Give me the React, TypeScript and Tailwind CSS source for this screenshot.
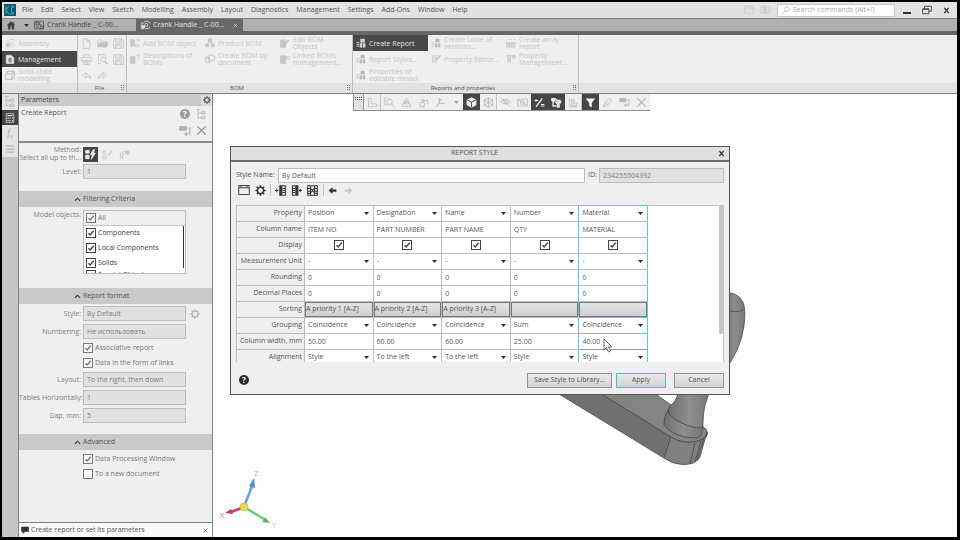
import React from 'react';
import clsx from 'clsx';

const menuItems = [
  'File', 'Edit', 'Select', 'View', 'Sketch', 'Modelling', 'Assembly', 'Layout',
  'Diagnostics', 'Management', 'Settings', 'Add-Ons', 'Window', 'Help',
];

// 16x16 glyphs, drawn with the current text colour
const glyphs = {
  home: <path d="M8 2 1 8.5h2V15h4v-5h2v5h4V8.5h2L12.5 6V3h-2v1.3z" fill="currentColor" stroke="none" />,
  drawing: <><path d="M1 2h14v12H1z" /><path d="M3 4h4v4H3zM9 4v4h4M3 11h5M10 10h5v4h-5z" /></>,
  part: <><path d="M2 5v9h5M2 5h4l2-3h3a5 5 0 0 1 0 12H8" /><circle cx="10" cy="8" r="2.5" /><path d="M3 9h4v4H3z" fill="currentColor" /></>,
  report: <><path d="M2 2h8l4 4v9H2z" fill="currentColor" /><path d="M5 8h6M5 11h6M8 6v8" stroke="#555" /></>,
  solid: <><path d="M1 6h10v9H1z" strokeWidth="2" /><path d="M1 6l3-4h11v9l-4 4M11 6l4-4" strokeWidth="2" /></>,
  page: <path d="M3 1h6l4 4v10H3zM9 1v4h4" />,
  folder: <><path d="M1 13V3h5l1 2h7v2" /><path d="M1 13l2-6h13l-2 6z" fill="currentColor" /></>,
  save: <><path d="M1 1h12l2 2v12H1zM4 1v5h8V1M4 15V9h8v6M10 2v3M6 11h4" /></>,
  print: <><path d="M4 5V1h8v4M4 11H1V5h14v6h-3M4 9h8v6H4zM6 11h4M6 13h4" /></>,
  preview: <><path d="M6 14H2V1h8l3 3v3" /><circle cx="9" cy="8" r="3.5" /><path d="m11.5 10.5 3.5 4" strokeWidth="2" /></>,
  undo: <path d="M7 3 2 8l5 4V9.500h3q3 0 4 3 0-6-5-6H7z" />,
  redo: <path d="m9 3 5 5-5 4V9.500H6q-3 0-4 3 0-6 5-6h2z" />,
  bomAdd: <><path d="M1 3h6v10H1z" fill="currentColor" /><path d="M1 6h7M1 9h7M9 10h5v4H9zM13 1v5M10.500 3.500h5" /></>,
  bomAsk: <><path d="M1 4h7v11H1z" fill="currentColor" /><path d="M11 3q0-2 2-2t2 2q0 1-2 2.500V7M13 8v1" /></>,
  product: <><path d="M5 1h6v5H5zM1 10h5v4H1zM10 10h5v4h-5z" fill="currentColor" /><path d="M8 6v2M3 10V8h10v2" /></>,
  bomDoc: <><path d="M1 5h6v9H1zM6 2h9v8H6z" strokeWidth="1.500" /><path d="M3 7h5M8 10v3H5" strokeWidth="1.500" /></>,
  bomEdit: <><path d="M1 3h8v12H1z" fill="currentColor" /><path d="m8 10 6-7" strokeWidth="3" /></>,
  link: <><path d="M1 3h8v12H1z" fill="currentColor" /><path d="M10 4h5v4h-5zM7 6h5" /></>,
  create: <><path d="M7 1h7v6H7zM6 8.500h4V15H6zM11 8.500h4V15h-4z" fill="currentColor" stroke="none" /><path d="M1 7h4M1 10h4M1 13h4M9 3h3M9 5h3" strokeWidth="1.500" /><path d="M9 3h3M9 5h3M7 11h2M12 11h2M7 13h2M12 13h2" stroke="#888" strokeWidth="0.8" /></>,
  arrayRep: <><path d="M1 7h5v8H1zM8 7h6v8H8z" /><path d="M1 9h5M1 12h5M8 9h6M8 12h6M3 2h1M7 2h2M12 2h2" strokeWidth="2" /></>,
  propEdit: <><path d="M1 3h9M3 3v12M3 7h6M3 11h6M8 4v11" strokeWidth="1.500" /><path d="m9 9 6-7" strokeWidth="2.500" /></>,
  propMan: <><path d="M1 3h8M3 3v12M7 3v12M3 7h4M3 11h4" strokeWidth="1.500" /><circle cx="12.500" cy="4.500" r="2" strokeWidth="2" /></>,
  corner: <path d="M2 2h4v8h8v4H2z" />,
  zoomSel: <><circle cx="8" cy="7" r="4" /><path d="m11 10 4 5M1 1v10M1 1h3M1 11h3" /></>,
  orient: <><path d="M2 10h12v4H2zM5 10V6l3-4 3 4v4" /><path d="M5 7h6" strokeWidth="2" /></>,
  rotate: <><path d="M6 5h8v6M3 8h6v6H3z" /><path d="m9 2-4 3 4 2" /></>,
  axes: <path d="M6 1v8M6 9l-4 5M6 9h8M6 6l4-3" strokeWidth="1.500" />,
  cube: <><path d="m8 1 6.500 3v7.500L8 15l-6.500-3.500V4z" fill="currentColor" /><path d="M1.500 4 8 7.500 14.500 4M8 7.500V15" stroke="#333" /></>,
  wireCube: <path d="m8 1 6 3v8l-6 3-6-3V4zM2 4l6 4 6-4M8 8v7M2 12l6-4 6 4M8 1v7" />,
  eye: <><path d="M1 7q7-7 14 0-7 6-14 0z" /><circle cx="8" cy="7" r="2" /><path d="m2 2 12 12" /></>,
  section: <><path d="M1 3h14v10H1z" /><circle cx="8" cy="8" r="3" /><path d="m2 4 12 8" /></>,
  screen: <><path d="M1 3h14v10H1z" /><path d="M6 3h4v10H6z" fill="currentColor" /></>,
  snap: <><path d="M1 5h5M3 3v4M10 11h5M10 13h5" strokeWidth="1.500" /><path d="m3 14 9-12" strokeWidth="2" /></>,
  filterObj: <><path d="M1 3h6l2 2h4v3M3 6v7h5" strokeWidth="2" /><path d="M1 2h5v4H1zM6 7h9l-3 4v4h-3v-4z" fill="currentColor" /></>,
  layers: <><path d="M2 2v12h12M5 4h4v3H5zM5 9h8v3H5z" /></>,
  funnel: <path d="M1 2h14L10 8.500V15l-4-2V8.500z" fill="currentColor" stroke="none" />,
  pencil: <path d="m2 14 3-7 6-5 3 3-5 6z M5 7l4 4" />,
  applyRow: <><path d="M1 2h9v5H1z" fill="currentColor" /><path d="M12 4h2.500v8H8M10.500 9.500 8 12l2.500 2.500" strokeWidth="1.500" /></>,
  cross: <path d="m2 2 12 12M14 2 2 14" strokeWidth="2" />,
  tree: <path d="M3 1v13M1 1h5M3 6h4M3 13h4M8 4h5v3H8zM8 11h5v3H8z" />,
  calc: <><path d="M2 1h12v14H2z" /><path d="M4 4h8M4 8h2M7 8h2M11 8h2M4 12h2M7 12h2M11 12h2" strokeWidth="2" /></>,
  lines: <path d="M1 3h14M1 8h14M1 13h14" strokeWidth="2" />,
  gear: <><circle cx="8" cy="8" r="4.500" strokeWidth="2" /><path d="M8 .5v3M8 12.500v3M.5 8h3M12.500 8h3M2.700 2.700l2 2M11.300 11.300l2 2M13.300 2.700l-2 2M4.700 11.300l-2 2" strokeWidth="2.500" /></>,
  bolt: <><path d="M1 2h5v4H1zM1 9h5v5H1z" fill="currentColor" /><path d="m12 1-4 7h3l-2 7 6-9h-3l2-5z" fill="currentColor" /></>,
  tick: <><path d="M1 3h4v4H1zM1 10h5v4H1z" /><path d="m8 6 2 3 5-7" strokeWidth="1.500" /></>,
  gauge: <><path d="M2 14V8l4-4h4M5 14V9l3-2" strokeWidth="1.500" /><circle cx="12" cy="5" r="2.500" fill="currentColor" /></>,
  window: <path d="M1 2h14v12H1zM1 5h14M4 2v3M12 2v3" />,
  colLeft: <><path d="M7 1h3v14H7z" fill="currentColor" strokeWidth="1.500" /><path d="M11 1h4v14h-4M11 5h4M11 8h4M11 11h4M0 8h5M2.500 5.500v5" strokeWidth="1.500" /></>,
  colRight: <><path d="M7 1h3v14H7z" fill="currentColor" strokeWidth="1.500" /><path d="M6 1H2v14h4M2 5h4M2 8h4M2 11h4M11 8h5M13.500 5.500v5" strokeWidth="1.500" /></>,
  colDel: <><path d="M1 1h14v14H1zM5 1v14M11 1v14M1 5h4M1 9h4M1 12h4M11 5h4M11 9h4M11 12h4" strokeWidth="1.500" /><path d="m6 5 4 6M10 5l-4 6" strokeWidth="1.500" /></>,
  left: <path d="m1 8 7-6v4h7v4H8v4z" fill="currentColor" stroke="none" />,
  right: <path d="m15 8-7-6v4H1v4h7v4z" fill="currentColor" stroke="none" />,
  bubble: <path d="M1 2h14v9H8l-4 4v-4H1z" fill="currentColor" />,
  lens: <><circle cx="10" cy="6" r="4.500" /><path d="m7 9.500-5.500 5.500" strokeWidth="1.500" /></>,
  restore: <path d="M1 6h10v8H1zM4 6V2h11v8h-4M1 7h10" strokeWidth="1.500" />,
  close: <path d="m3 2 10 12M13 2 3 14" strokeWidth="3" />,
  chevron: <path d="m2 11 6-6 6 6" strokeWidth="2.500" />,
};

type GlyphName = keyof typeof glyphs;

function Glyph({ name, className = 'size-3' }: { name: GlyphName; className?: string }) {
  return (
    <svg viewBox="0 0 16 16" fill="none" stroke="currentColor" strokeWidth="1.2" className={clsx('shrink-0', className)} aria-hidden="true">
      {glyphs[name]}
    </svg>
  );
}

function IconButton({ name, label, className, size }: { name: GlyphName; label: string; className?: string; size?: string }) {
  return (
    <button type="button" aria-label={label} className={clsx('flex shrink-0 items-center justify-center', className)}>
      <Glyph name={name} className={size} />
    </button>
  );
}

function Check({ id, label, checked = true, tone = 'text-[#444]' }: { id: string; label?: string; checked?: boolean; tone?: string }) {
  return (
    <span className={clsx('inline-flex items-center gap-[2px]', tone)}>
      <span className="grid size-[10px] shrink-0">
        <input
          id={id}
          type="checkbox"
          defaultChecked={checked}
          aria-label={label ? undefined : id}
          className="peer col-start-1 row-start-1 size-[10px] appearance-none border border-current bg-white/60"
        />
        <svg viewBox="0 0 10 10" className="pointer-events-none invisible col-start-1 row-start-1 size-[10px] peer-checked:visible" fill="none" stroke="currentColor" strokeWidth="1.4" aria-hidden="true">
          <path d="M2.500 5.200 4.200 7l3.500-4.200" />
        </svg>
      </span>
      {label && <label htmlFor={id} className="whitespace-nowrap">{label}</label>}
    </span>
  );
}

function MenuBar() {
  return (
    <header className="flex h-[17px] items-center border-b border-[#808080] bg-[#e1e2e2] text-[#555]">
      <svg viewBox="0 0 12 12" className="ml-[2px] size-3 shrink-0" aria-hidden="true">
        <path d="M0 0h12v12H0z" fill="#10566b" />
        <path d="M2 2v8M2 6l3-4M2 6l3 4M10 3a3 3 0 1 0 0 6M7 2h3M6 10h4" fill="none" stroke="#35b6d3" strokeWidth="1" />
      </svg>
      <nav className="ml-[6px] flex gap-2">
        {menuItems.map((item) => (
          <button key={item} type="button">{item}</button>
        ))}
      </nav>
      <div className="ml-auto flex items-center text-[#cacaca]">
        <IconButton name="window" label="Panel layout" className="mr-[6px]" size="size-[10px]" />
        <IconButton name="screen" label="Screen layout" className="mr-[7px]" size="size-[10px]" />
        <div className="flex h-[13px] w-[118px] items-center gap-[3px] border border-[#c8c8c8] bg-white pl-1 text-[#999]">
          <Glyph name="lens" className="size-2" />
          <input aria-label="Search commands" placeholder="Search commands (Alt+/)" className="w-full min-w-0 outline-none placeholder:text-[#aaa]" />
        </div>
        <button type="button" aria-label="Minimize" className="ml-2 flex h-3 w-[10px] items-end pb-[2px]">
          <span className="h-[2px] w-2 bg-[#333]" />
        </button>
        <IconButton name="restore" label="Restore" className="ml-[9px] text-[#444]" size="size-[10px]" />
        <IconButton name="close" label="Close" className="mr-[7px] ml-[11px] text-[#333]" size="size-[7px]" />
      </div>
    </header>
  );
}

function TabBar() {
  return (
    <div className="flex h-4 items-stretch border-b-4 border-[#676767] bg-[#b0b0b0] text-[#444]">
      <IconButton name="home" label="Home" className="w-[18px]" size="size-[10px]" />
      <button type="button" aria-label="Recent files" className="flex w-3 items-center justify-center">
        <Caret />
      </button>
      <button type="button" className="ml-[2px] flex w-[102px] items-center gap-[3px]">
        <Glyph name="drawing" className="size-[10px]" />
        Crank Handle _ C-00...
      </button>
      <div className="flex w-[107px] items-center bg-[#676767] pl-1 text-[#e4e4e4]">
        <button type="button" className="flex items-center gap-[3px]">
          <Glyph name="part" className="size-[10px]" />
          Crank Handle _ C-00...
        </button>
        <IconButton name="cross" label="Close tab" className="ml-[9px]" size="size-[5px]" />
      </div>
    </div>
  );
}

function Caret() {
  return (
    <svg viewBox="0 0 5 3" className="pointer-events-none h-[3px] w-[5px] shrink-0" aria-hidden="true">
      <path d="M0 0h5L2.500 3z" fill="#333" />
    </svg>
  );
}

function Grip() {
  return (
    <svg viewBox="0 0 3 6" className="h-[6px] w-[3px] shrink-0" aria-hidden="true">
      <path d="M0 0h1v1H0zM2 0h1v1H2zM0 2h1v1H0zM2 2h1v1H2zM0 4h1v1H0zM2 4h1v1H2z" fill="#777" />
    </svg>
  );
}

interface Command {
  icon: GlyphName;
  text: string;
  active?: boolean;
}

function CommandButton({ icon, text, active }: Command) {
  return (
    <button
      type="button"
      className={clsx('flex h-4 items-center gap-[3px] pl-[3px] text-left leading-[7px] whitespace-pre', active ? 'bg-[#484848] text-[#e2e2e2]' : 'text-[#c6c6c6]')}
    >
      <Glyph name={icon} className="size-[10px]" />
      <span>{text}</span>
    </button>
  );
}

const bomCommands: Command[] = [
  { icon: 'bomAdd', text: 'Add BOM object' },
  { icon: 'product', text: 'Product BOM' },
  { icon: 'bomEdit', text: 'Edit BOM\nObjects' },
  { icon: 'bomAsk', text: 'Descriptions of\nBOMs' },
  { icon: 'bomDoc', text: 'Create BOM by\ndocument' },
  { icon: 'link', text: 'Linked BOMs\nmanagement...' },
];

const reportCommands: Command[] = [
  { icon: 'create', text: 'Create Report', active: true },
  { icon: 'create', text: 'Create table of\nversions...' },
  { icon: 'arrayRep', text: 'Create array\nreport' },
  { icon: 'create', text: 'Report Styles...' },
  { icon: 'propEdit', text: 'Property Editor...' },
  { icon: 'propMan', text: 'Property\nManagement...' },
  { icon: 'create', text: 'Properties of\neditable model' },
];

const fileIcons: [GlyphName, string][] = [
  ['page', 'New'], ['folder', 'Open'], ['save', 'Save'],
  ['print', 'Print'], ['preview', 'Preview'], ['save', 'Save as'],
  ['undo', 'Undo'], ['redo', 'Redo'],
];

function RibbonGroup({ title, className, children }: { title: string; className: string; children: React.ReactNode }) {
  return (
    <section className={clsx('flex shrink-0 flex-col border-r border-[#bdbdbd]', className)}>
      <div className="h-12">{children}</div>
      <div className="flex h-[10px] items-center bg-[#e2e2e2] pr-[2px] text-[#555]">
        <span className="flex-1 text-center text-[6px]">{title}</span>
        {title && <Grip />}
      </div>
    </section>
  );
}

function Ribbon() {
  return (
    <div className="flex border-b border-[#808080] bg-[#efefef]">
      <RibbonGroup title="" className="w-[76px]">
        <div className="grid">
          <CommandButton icon="part" text="Assembly" />
          <CommandButton icon="report" text="Management" active />
          <CommandButton icon="solid" text={'Solid-state\nmodelling'} />
        </div>
      </RibbonGroup>
      <RibbonGroup title="File" className="w-[49px]">
        <div className="grid grid-cols-3 text-[#c2c2c2]">
          {fileIcons.map(([icon, label]) => (
            <IconButton key={label} name={icon} label={label} className="h-4" size="size-[11px]" />
          ))}
        </div>
      </RibbonGroup>
      <RibbonGroup title="BOM" className="w-[226px]">
        <div className="grid grid-cols-3">
          {bomCommands.map((command) => (
            <CommandButton key={command.text} {...command} />
          ))}
        </div>
      </RibbonGroup>
      <RibbonGroup title="Reports and properties" className="w-[226px]">
        <div className="grid grid-cols-3">
          {reportCommands.map((command) => (
            <CommandButton key={command.text} {...command} />
          ))}
        </div>
      </RibbonGroup>
      <div className="flex flex-1 flex-col">
        <div className="h-12" />
        <div className="h-[10px] bg-[#e2e2e2]" />
      </div>
    </div>
  );
}

function SideStrip() {
  return (
    <aside className="flex w-4 shrink-0 flex-col bg-[#c4c5c5]">
      <IconButton name="tree" label="Model tree" className="h-4 bg-[#e4e4e4] text-[#b4b4b4]" />
      <IconButton name="calc" label="Parameters" className="h-[15px] bg-[#454545] text-[#ddd]" size="size-[10px]" />
      <button type="button" aria-label="Variables" className="h-4 bg-[#e4e4e4] font-['Liberation_Serif',serif] text-[10px] leading-4 text-[#aaa] italic">
        f<sub className="text-[6px]">x</sub>
      </button>
      <IconButton name="lines" label="Lists" className="h-4 bg-[#e4e4e4] text-[#b4b4b4]" size="size-[10px]" />
    </aside>
  );
}

function SectionHeader({ title }: { title: string }) {
  return (
    <button type="button" className="flex h-4 w-full items-center gap-[2px] bg-[#c9c9c9] pl-[55px] text-[#555]">
      <Glyph name="chevron" className="size-[7px] text-[#333]" />
      {title}
    </button>
  );
}

function Field({ id, label, value, children }: { id: string; label: string; value: string; children?: React.ReactNode }) {
  return (
    <div className="flex items-center gap-[2px] text-[#808080]">
      <label htmlFor={id} className="w-[62px] shrink-0 text-right whitespace-nowrap">{label}:</label>
      <input id={id} defaultValue={value} className="h-[15px] w-[103px] border border-[#bdbdbd] bg-[#e1e1e1] px-[3px] outline-none" />
      {children}
    </div>
  );
}

function ParametersPanel() {
  return (
    <section className="flex w-[195px] shrink-0 flex-col border-x border-[#808080] bg-[#efefef]">
      <div className="flex h-3 items-center justify-between bg-[#c9c9c9] pl-[2px] text-[#444]">
        Parameters
        <IconButton name="gear" label="Panel settings" className="size-[11px] bg-[#dedede]" size="size-2" />
      </div>
      <div className="flex h-[37px] justify-between border-b-2 border-[#8a8a8a] pt-[2px] pr-[5px] pl-[2px] text-[#555]">
        <h2>Create Report</h2>
        <div className="grid grid-cols-2 gap-x-1 text-[#b0b0b0]">
          <button type="button" aria-label="Help" className="flex size-3 items-center justify-center">
            <span className="size-[10px] rounded-full bg-[#999] text-center text-[8px] leading-[10px] font-bold text-white">?</span>
          </button>
          <IconButton name="tree" label="Tree" className="size-3" size="size-[11px]" />
          <IconButton name="applyRow" label="Create" className="size-3" size="size-3" />
          <IconButton name="cross" label="Cancel" className="size-3 text-[#909090]" size="size-[11px]" />
        </div>
      </div>

      <div className="flex flex-col gap-[2px] pt-[3px]">
        <div className="flex items-center gap-[2px] text-[#808080]">
          <div className="w-[62px] shrink-0 text-right leading-2 whitespace-nowrap">
            <div>Method:</div>
            <div>Select all up to th...</div>
          </div>
          <IconButton name="bolt" label="Select all" className="size-[15px] bg-[#454545] text-[#eee]" size="size-[11px]" />
          <IconButton name="tick" label="Select manually" className="size-[15px] text-[#c4c4c4]" size="size-[11px]" />
          <IconButton name="gauge" label="Select by level" className="size-[15px] text-[#c4c4c4]" size="size-[11px]" />
        </div>
        <Field id="level" label="Level" value="1" />
      </div>

      <div className="pt-3">
        <SectionHeader title="Filtering Criteria" />
        <div className="flex gap-[2px] pt-[3px] text-[#808080]">
          <div className="w-[62px] shrink-0 text-right whitespace-nowrap">Model objects:</div>
          <div className="h-16 w-[103px] overflow-hidden border border-[#bdbdbd] bg-white">
            <div className="flex h-[15px] items-center border-b border-[#c4c4c4] bg-[#efefef] pl-[2px]">
              <Check id="all" label="All" tone="text-[#777]" />
            </div>
            <div className="mr-px flex flex-col gap-[5px] border-r border-[#333] pt-[2px] pl-[2px] leading-[10px]">
              <Check id="components" label="Components" />
              <Check id="local-components" label="Local Components" />
              <Check id="solids" label="Solids" />
            </div>
            <div className="pt-[2px] pl-[2px] leading-[10px]">
              <Check id="special-objects" label="Special Objects" checked={false} />
            </div>
          </div>
        </div>
      </div>

      <div className="pt-[14px]">
        <SectionHeader title="Report format" />
        <div className="flex flex-col gap-[3px] pt-[2px]">
          <Field id="style" label="Style" value="By Default">
            <IconButton name="gear" label="Style settings" className="ml-[2px] text-[#b8b8b8]" size="size-[10px]" />
          </Field>
          <Field id="numbering" label="Numbering" value="Не использовать" />
          <div className="flex flex-col items-start gap-[5px] py-px pl-16 leading-[10px]">
            <Check id="associative" label="Associative report" tone="text-[#777]" />
            <Check id="links" label="Data in the form of links" tone="text-[#777]" />
          </div>
          <Field id="layout" label="Layout" value="To the right, then down" />
          <Field id="tables" label="Tables Horizontally" value="1" />
          <Field id="gap" label="Gap, mm" value="5" />
        </div>
      </div>

      <div className="pt-[11px]">
        <SectionHeader title="Advanced" />
        <div className="flex flex-col items-start gap-[5px] pt-1 pl-16 leading-[10px]">
          <Check id="data-window" label="Data Processing Window" tone="text-[#777]" />
          <Check id="new-document" label="To a new document" checked={false} tone="text-[#777]" />
        </div>
      </div>

      <div className="mt-auto flex h-[15px] items-center gap-[2px] border-t border-[#808080] bg-[#fafafa] px-[2px] text-[#555]">
        <Glyph name="bubble" className="size-2 text-[#333]" />
        <span className="flex-1 whitespace-nowrap">Create report or set its parameters</span>
        <IconButton name="cross" label="Dismiss" size="size-[5px]" className="mr-[2px]" />
      </div>
    </section>
  );
}

interface ViewTool {
  icon: GlyphName;
  label: string;
  active?: boolean;
  divider?: boolean;
}

const viewTools: ViewTool[] = [
  { icon: 'corner', label: 'Coordinate system', divider: true },
  { icon: 'zoomSel', label: 'Zoom' },
  { icon: 'orient', label: 'Orientation' },
  { icon: 'rotate', label: 'Rotate' },
  { icon: 'axes', label: 'Axes' },
];

const displayTools: ViewTool[] = [
  { icon: 'cube', label: 'Shaded', active: true },
  { icon: 'wireCube', label: 'Wireframe', divider: true },
  { icon: 'eye', label: 'Hide' },
  { icon: 'section', label: 'Section' },
  { icon: 'snap', label: 'Snaps', active: true },
  { icon: 'filterObj', label: 'Object filter', active: true },
  { icon: 'layers', label: 'Layers', divider: true },
  { icon: 'funnel', label: 'Filter', active: true },
  { icon: 'pencil', label: 'Edit' },
  { icon: 'applyRow', label: 'Confirm' },
  { icon: 'cross', label: 'Stop' },
];

function ViewToolbar() {
  const renderTool = (tool: ViewTool) => (
    <IconButton
      key={tool.label}
      name={tool.icon}
      label={tool.label}
      className={clsx('w-[17px]', tool.active ? 'bg-[#454545] text-[#eee]' : 'text-[#b8b8b8]', tool.divider && 'border-r border-[#c4c4c4]')}
      size="size-[11px]"
    />
  );

  return (
    <div className="relative ml-[140px] flex h-[17px] w-[297px] border-b border-l border-[#909090] bg-[#efefef]">
      <div className="flex w-[10px] justify-center border-r border-[#999] bg-[#e2e2e2] pt-[3px]">
        <svg viewBox="0 0 7 3" className="h-[3px] w-[7px]" aria-hidden="true">
          <path d="M0 0h1v1H0zM2 0h1v1H2zM4 0h1v1H4zM6 0h1v1H6zM0 2h1v1H0zM2 2h1v1H2zM4 2h1v1H4zM6 2h1v1H6z" fill="#555" />
        </svg>
      </div>
      {viewTools.map(renderTool)}
      <button type="button" aria-label="More orientations" className="flex w-[14px] items-center justify-center opacity-40">
        <Caret />
      </button>
      {displayTools.map(renderTool)}
    </div>
  );
}

// Crank handle model and the axis triad
function Scene() {
  return (
    <svg viewBox="213 94 744 443" className="absolute inset-0 size-full" aria-hidden="true">
      <defs>
        <linearGradient id="grip" x1="0" x2="1">
          <stop offset="0" stopColor="#6e6e6e" />
          <stop offset="0.5" stopColor="#8e8e8e" />
          <stop offset="1" stopColor="#777" />
        </linearGradient>
      </defs>
      <g stroke="#3f3f3f" strokeWidth="0.7" strokeLinejoin="round">
        <path d="M549 388h45l77 49-7 21z" fill="#707070" />
        <path d="M592 388h55l27 19 32 22q3 5 0 8-8 7-23 5-7-1-12-5z" fill="#838383" />
        <path d="M671 437q14 9 30 3 7-3 6-8l-7 25q-4 8-18 7.500-10-.5-18-6.500z" fill="#808080" />
        <path d="m695 443-5 21M701 441l-6 21M704 438l-7 22" fill="none" />
        <path d="M668 410q-5 8-4 15 10 13 32 13 4-1 5-3l2-9z" fill="url(#grip)" />
        <path d="M678 390q0 10-8 16-3 4-1 8 10 11 29 14 5 0 5-3 0-12 2-20 2-6 5-15z" fill="url(#grip)" />
        <path d="M724 293q13-2 19 9 3 8 1 24-3 23-20 46z" fill="url(#grip)" />
        <path d="M724 310q13 3 19 0" fill="none" />
      </g>
      <g fill="none" strokeWidth="2.500">
        <path d="m244 507 8-21" stroke="#6b9fd6" />
        <path d="m244 507-13 5" stroke="#c4405c" />
        <path d="m244 507 20 12" stroke="#72c97b" />
      </g>
      <path d="m254 478 1 10-6-2z" fill="#5688c4" />
      <path d="m225 513 6-4 2 5z" fill="#c23854" />
      <path d="m270 523-8-1 3-5z" fill="#5cb868" />
      <circle cx="244" cy="507" r="4" fill="#e6d95a" stroke="#b9a93c" strokeWidth="0.5" />
      <g fontSize="8" textAnchor="middle">
        <text x="256" y="476" fill="#aeb7e8">Z</text>
        <text x="222" y="518" fill="#e8799a">X</text>
        <text x="274" y="528" fill="#b5deb5">Y</text>
      </g>
    </svg>
  );
}

const columns = [
  { property: 'Position', name: 'ITEM NO', sorting: 'A priority 1 [A-Z]', grouping: 'Coincidence', width: '50.00', alignment: 'Style' },
  { property: 'Designation', name: 'PART NUMBER', sorting: 'A priority 2 [A-Z]', grouping: 'Coincidence', width: '60.00', alignment: 'To the left' },
  { property: 'Name', name: 'PART NAME', sorting: 'A priority 3 [A-Z]', grouping: 'Coincidence', width: '60.00', alignment: 'To the left' },
  { property: 'Number', name: 'QTY', sorting: '', grouping: 'Sum', width: '25.00', alignment: 'Style' },
  { property: 'Material', name: 'MATERIAL', sorting: '', grouping: 'Coincidence', width: '40.00', alignment: 'Style' },
];

type Column = (typeof columns)[number];

function CellSelect({ label, value }: { label: string; value: string }) {
  return (
    <div className="flex items-center pr-1">
      <select aria-label={label} className="h-[15px] w-full min-w-0 appearance-none pl-[3px] outline-none">
        <option>{value}</option>
      </select>
      <Caret />
    </div>
  );
}

function CellInput({ label, value }: { label: string; value: string }) {
  return <input aria-label={label} defaultValue={value} className="block h-[15px] w-full px-[3px] outline-none" />;
}

const rows: { title: string; cell: (column: Column) => React.ReactNode }[] = [
  { title: 'Property', cell: (c) => <CellSelect label={`Property ${c.name}`} value={c.property} /> },
  { title: 'Column name', cell: (c) => <CellInput label={`Column name ${c.property}`} value={c.name} /> },
  { title: 'Display', cell: (c) => <div className="flex justify-center"><Check id={`display-${c.property}`} /></div> },
  { title: 'Measurement Unit', cell: (c) => <CellSelect label={`Unit ${c.property}`} value="-" /> },
  { title: 'Rounding', cell: (c) => <CellInput label={`Rounding ${c.property}`} value="0" /> },
  { title: 'Decimal Places', cell: (c) => <CellInput label={`Decimal places ${c.property}`} value="0" /> },
  {
    title: 'Sorting',
    cell: (c) => (
      <button type="button" aria-label={`Sorting ${c.property}`} className="block h-[15px] w-full border border-[#777] bg-linear-to-b from-[#e4e4e4] to-[#cfcfcf] text-left whitespace-nowrap">
        {c.sorting}
      </button>
    ),
  },
  { title: 'Grouping', cell: (c) => <CellSelect label={`Grouping ${c.property}`} value={c.grouping} /> },
  { title: 'Column width, mm', cell: (c) => <CellInput label={`Column width ${c.property}`} value={c.width} /> },
  { title: 'Alignment', cell: (c) => <CellSelect label={`Alignment ${c.property}`} value={c.alignment} /> },
];

function StyleTable() {
  return (
    <div className="flex h-[157px] items-start overflow-hidden border-r border-[#c4c4c4] bg-white">
      <table className="w-[412px] shrink-0 table-fixed border-collapse text-[#555]">
        <colgroup>
          <col className="w-[68px]" />
          {columns.map((column) => (
            <col key={column.property} />
          ))}
        </colgroup>
        <tbody>
          {rows.map((row) => (
            <tr key={row.title} className="h-4">
              <th scope="row" className="border border-[#bdbdbd] bg-[#efefef] p-0 pr-[2px] text-right font-normal whitespace-nowrap">{row.title}</th>
              {columns.map((column, i) => (
                <td
                  key={column.property}
                  className={clsx(
                    'border p-0',
                    i < 3 && 'border-[#bdbdbd]',
                    i === 3 && 'border-[#bdbdbd] border-r-[#4fd0d4]',
                    i === 4 && 'border-x-[#4fd0d4]',
                    i === 4 && (row.title === 'Property' ? 'border-t-[#4fd0d4] border-b-[#bdbdbd]' : row.title === 'Grouping' ? 'border-y-[#4fd0d4]' : row.title === 'Column width, mm' ? 'border-t-[#4fd0d4] border-b-[#999]' : row.title === 'Sorting' ? 'border-t-[#bdbdbd] border-b-[#4fd0d4]' : 'border-y-[#bdbdbd]'),
                  )}
                >
                  {row.cell(column)}
                </td>
              ))}
            </tr>
          ))}
        </tbody>
      </table>
      <div className="flex flex-1 justify-end border-t border-[#c4c4c4]">
        <div className="h-[128px] w-1 bg-[#c6c6c6]" />
      </div>
    </div>
  );
}

function DialogButton({ text, className }: { text: string; className: string }) {
  return (
    <button type="button" className={clsx('h-[15px] border bg-linear-to-b from-[#eaeaea] to-[#d2d2d2] text-[#555]', className)}>
      {text}
    </button>
  );
}

function ReportStyleDialog() {
  return (
    <div className="pointer-events-none fixed inset-0 flex items-center justify-center">
      <div role="dialog" aria-labelledby="dialog-title" className="pointer-events-auto relative w-[500px] border border-[#555] bg-[#efefef] text-[#555]">
        <div className="flex h-[15px] items-center border-b-2 border-[#6c6c6c] bg-[#dfdfdf] pr-1">
          <h1 id="dialog-title" className="flex-1 text-center">REPORT STYLE</h1>
          <IconButton name="close" label="Close dialog" className="text-[#333]" size="size-[7px]" />
        </div>
        <div className="px-[5px] pt-[6px] pb-[6px]">
          <div className="flex items-center">
            <label htmlFor="style-name" className="w-[42px] shrink-0 whitespace-nowrap">Style Name:</label>
            <input id="style-name" defaultValue="By Default" className="h-[15px] min-w-0 flex-1 border border-[#bdbdbd] bg-white px-[3px] outline-none" />
            <label htmlFor="style-id" className="w-[14px] shrink-0 pl-[3px]">ID:</label>
            <input id="style-id" readOnly value="234255504392" className="h-[15px] w-[125px] border border-[#bdbdbd] bg-[#e1e1e1] px-[3px] text-[#808080] outline-none" />
          </div>
          <div className="flex h-[22px] items-center pb-[7px] pl-[2px] text-[#333]">
            <IconButton name="window" label="New style" size="size-3" />
            <IconButton name="gear" label="Settings" className="mr-1 ml-[5px]" size="size-[11px]" />
            <span className="h-3 w-px bg-[#c4c4c4]" />
            <IconButton name="colLeft" label="Insert column before" className="ml-1" size="size-[11px]" />
            <IconButton name="colRight" label="Insert column after" className="ml-[5px]" size="size-[11px]" />
            <IconButton name="colDel" label="Delete column" className="mx-[5px]" size="size-[11px]" />
            <span className="h-3 w-px bg-[#c4c4c4]" />
            <IconButton name="left" label="Move left" className="ml-1" size="size-[9px]" />
            <IconButton name="right" label="Move right" className="ml-[7px] text-[#c8c8c8]" size="size-[9px]" />
          </div>
          <StyleTable />
          <div className="flex items-center pt-[11px] pl-[3px]">
            <button type="button" aria-label="Help" className="size-[10px] rounded-full bg-[#2c2c2c] text-[8px] leading-[10px] font-bold text-white">?</button>
            <DialogButton text="Save Style to Library..." className="mr-1 ml-auto w-[85px] border-[#909090]" />
            <DialogButton text="Apply" className="mr-2 w-[50px] border-[#3fc4ca]" />
            <DialogButton text="Cancel" className="w-[50px] border-[#909090]" />
          </div>
        </div>
        <svg viewBox="0 0 10 15" className="pointer-events-none absolute top-[191px] left-[372px] h-[15px] w-[10px]" aria-hidden="true">
          <path d="M1 1v11l2.500-2.500L5.500 14l2-1-2-4H9z" fill="#fff" stroke="#444" strokeWidth="0.8" />
        </svg>
      </div>
    </div>
  );
}

export default function App() {
  return (
    <div className="flex min-h-screen flex-col border-t-2 border-r-[3px] border-b-[3px] border-l-2 border-black bg-white font-['Open_Sans','Noto_Sans',sans-serif] text-[7px] leading-[10px]">
      <MenuBar />
      <TabBar />
      <Ribbon />
      <main className="flex flex-1">
        <SideStrip />
        <ParametersPanel />
        <div className="relative flex-1 bg-[#fdfdfd]">
          <Scene />
          <ViewToolbar />
        </div>
      </main>
      <ReportStyleDialog />
    </div>
  );
}
